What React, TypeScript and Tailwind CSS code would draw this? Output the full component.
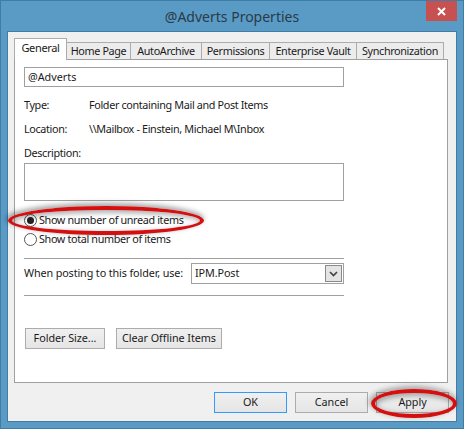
import React from "react";

function Tab({ label, w }: { label: string; w: string }) {
  return (
    <div className={`${w} h-[17px] -mr-px border border-b-0 border-[#acacac] bg-[#ececec] flex items-center justify-center whitespace-nowrap text-[10.8px] tracking-[-0.35px] leading-none text-[#1a1a1a]`}>
      {label}
    </div>
  );
}

function Rule() {
  return <div className="h-px w-[320px] bg-[#a0a0a0]" />;
}

function Btn({ label, w, cls = "border-[#acacac]" }: { label: string; w: string; cls?: string }) {
  return (
    <div className={`${w} h-[21px] border ${cls} bg-[linear-gradient(#f0f0f0,#e5e5e5)] flex items-center justify-center whitespace-nowrap text-[10.8px] tracking-[-0.05px] text-[#1a1a1a]`}>
      {label}
    </div>
  );
}

export default function App() {
  return (
    <div className="relative w-[464px] h-[429px] overflow-hidden bg-[#5a9bc6] border border-[#3f7da6] pt-[30px] pl-[6px] pr-[7px] pb-[6px] font-['Noto_Sans','DejaVu_Sans',sans-serif] text-[10.8px] tracking-[-0.35px] text-[#1a1a1a]">
      <div className="absolute top-0 left-0 w-full h-[30px] flex items-center justify-center text-[14px] tracking-normal text-[#2a3a46] pt-[1px]">
        @Adverts Properties
      </div>
      <div className="absolute top-0 right-[6px] w-[31px] h-[20px] bg-[#c75050] flex items-center justify-center">
        <svg width="9" height="9" viewBox="0 0 9 9"><path d="M1 1L8 8M8 1L1 8" stroke="#fff" strokeWidth="2" /></svg>
      </div>

      <div className="w-[450px] h-[391px] bg-[#f0f0f0] border border-[#3f7da6] pl-[6px] pt-[6px]">
        <div className="flex items-end h-[21px]">
          <div className="w-[53px] h-[22px] -mr-px -mb-px relative z-10 border border-b-0 border-[#acacac] bg-white flex items-center justify-center pb-[3px] text-[11px]">
            General
          </div>
          <Tab label="Home Page" w="w-[65px]" />
          <Tab label="AutoArchive" w="w-[72px]" />
          <Tab label="Permissions" w="w-[69px]" />
          <Tab label="Enterprise Vault" w="w-[88px]" />
          <Tab label="Synchronization" w="w-[88px]" />
        </div>
        <div className="w-[434px] h-[324px] bg-white border border-[#a0a0a0] pl-[9px] pt-[7px] flex flex-col">
          <div className="w-[320px] h-[20px] border border-[#a0a0a0] flex items-center pl-[3px] tracking-normal">@Adverts</div>

          <div className="flex mt-[9px] h-[18px] items-center">
            <div className="w-[65px]">Type:</div>
            <div>Folder containing Mail and Post Items</div>
          </div>
          <div className="flex mt-[6px] h-[18px] items-center">
            <div className="w-[65px]">Location:</div>
            <div>\\Mailbox - Einstein, Michael M\Inbox</div>
          </div>
          <div className="mt-[6px] h-[18px] flex items-center">Description:</div>
          <div className="w-[320px] h-[38px] mt-px border border-[#a0a0a0]" />

          <div className="flex items-center gap-[2px] h-[19px] mt-[10px]">
            <div className="w-[13px] h-[13px] rounded-full border border-[#555] bg-white flex items-center justify-center">
              <div className="w-[7px] h-[7px] rounded-full bg-[#222]" />
            </div>
            <span>Show number of unread items</span>
          </div>
          <div className="flex items-center gap-[2px] h-[19px]">
            <div className="w-[13px] h-[13px] rounded-full border border-[#555] bg-white" />
            <span>Show total number of items</span>
          </div>

          <div className="mt-[9px]"><Rule /></div>
          <div className="flex items-center mt-[4px] h-[21px] w-[320px] justify-between">
            <span className="whitespace-nowrap tracking-[-0.12px]">When posting to this folder, use:</span>
            <div className="w-[153px] h-[21px] border border-[#a0a0a0] flex items-center justify-between pl-[3px] pr-px tracking-[-0.1px]">
              <span>IPM.Post</span>
              <div className="w-[17px] h-[17px] border border-[#8a8a8a] bg-[#e4e4e4] flex items-center justify-center">
                <svg width="9" height="6" viewBox="0 0 9 6"><path d="M1 1L4.5 4.5L8 1" fill="none" stroke="#444" strokeWidth="1.7" /></svg>
              </div>
            </div>
          </div>
          <div className="mt-[11px]"><Rule /></div>

          <div className="flex gap-[11px] mt-[32px] pl-px">
            <Btn label="Folder Size..." w="w-[80px]" />
            <Btn label="Clear Offline Items" w="w-[106px]" />
          </div>
        </div>

        <div className="flex justify-end gap-[8px] mt-[9px] pr-[7px]">
          <Btn label="OK" w="w-[73px]" cls="border-[#3399ff]" />
          <Btn label="Cancel" w="w-[73px]" />
          <Btn label="Apply" w="w-[73px]" />
        </div>
      </div>

      <div className="absolute left-[7px] top-[205px] w-[196px] h-[29px] rounded-[50%] border-4 border-[#d40f0f] shadow-[-1px_-2px_5px_1px_rgba(0,0,0,0.35),inset_1px_2px_5px_1px_rgba(0,0,0,0.3)]" />
      <div className="absolute left-[370px] top-[388px] w-[86px] h-[29px] rounded-[50%] border-4 border-[#d40f0f] shadow-[-1px_-2px_5px_1px_rgba(0,0,0,0.3),inset_1px_2px_5px_1px_rgba(0,0,0,0.3)]" />
    </div>
  );
}
